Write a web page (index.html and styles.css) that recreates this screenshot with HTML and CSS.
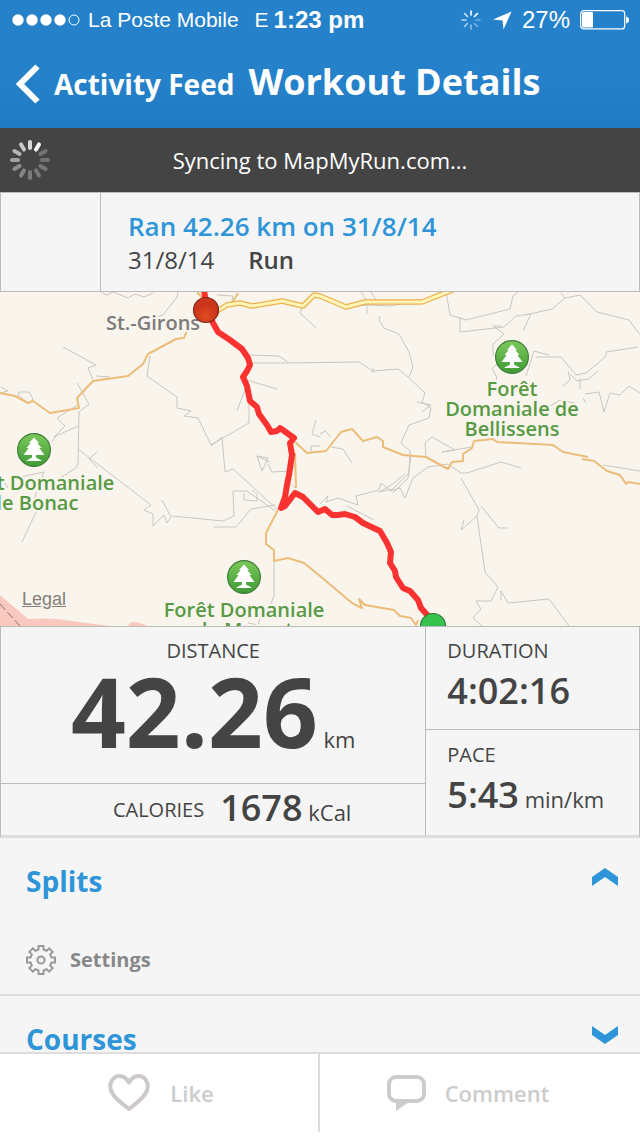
FILE: index.html
```html
<!DOCTYPE html>
<html lang="en">
<head>
    <meta charset="UTF-8">
    <meta name="viewport" content="width=device-width, initial-scale=1.0">
    <title>Workout Details</title>
    <link rel="stylesheet" href="styles.css">
</head>
<body>
    <header class="top">
        <div class="status-bar">
            <div class="status-left">
                <svg class="signal" width="68" height="12" viewBox="0 0 68 12" fill="#fff">
                    <circle cx="6" cy="6" r="5.7"/>
                    <circle cx="20" cy="6" r="5.7"/>
                    <circle cx="34" cy="6" r="5.7"/>
                    <circle cx="48" cy="6" r="5.7"/>
                    <circle cx="62" cy="6" r="5" fill="none" stroke="#fff"/>
                </svg>
                <span class="carrier">La Poste Mobile</span>
                <span class="network">E</span>
                <span class="time">1:23 pm</span>
            </div>
            <div class="status-right">
                <svg width="20" height="20" viewBox="-10 -10 20 20" stroke="#fff" stroke-width="1.6" stroke-linecap="round">
                    <path d="M0-5V-9"/>
                    <path d="M3.5-3.5L6.5-6.5"/>
                    <path d="M5 0H9" opacity=".35"/>
                    <path d="M3.5 3.5L6.5 6.5" opacity=".4"/>
                    <path d="M0 5V9" opacity=".5"/>
                    <path d="M-3.5 3.5L-6.5 6.5" opacity=".6"/>
                    <path d="M-5 0H-9" opacity=".7"/>
                    <path d="M-3.5-3.5L-6.5-6.5" opacity=".8"/>
                </svg>
                <svg class="location" width="19" height="19" viewBox="0 0 19 19" fill="#fff">
                    <path d="M18.500.5L10.500 18.500 9.500 9.500 0 8.500z"/>
                </svg>
                <span class="percent">27%</span>
                <svg width="50" height="20" viewBox="0 0 50 20">
                    <rect x=".7" y=".7" width="44" height="18.200" rx="3" fill="none" stroke="#fff" stroke-width="1.200"/>
                    <rect x="2" y="2" width="11" height="15.500" rx="1" fill="#fff"/>
                    <path d="M46 6.500q3 .5 3 3.500t-3 3.500z" fill="#fff"/>
                </svg>
            </div>
        </div>
        <nav class="nav-bar">
            <button type="button" class="back">
                <svg width="24" height="40" viewBox="0 0 24 40" fill="none" stroke="#fff" stroke-width="6">
                    <path d="M21.500 2.500L4 20l17.500 17.500"/>
                </svg>
                <span>Activity Feed</span>
            </button>
            <h1>Workout Details</h1>
        </nav>
    </header>

    <div class="sync" role="status">
        <svg width="40" height="40" viewBox="-20 -20 40 40" stroke="#fff" stroke-width="4" stroke-linecap="round">
            <path d="M0-12V-18" opacity=".8"/>
            <path d="M0-12V-18" transform="rotate(30)" opacity=".95"/>
            <path d="M0-12V-18" transform="rotate(60)" opacity=".25"/>
            <path d="M0-12V-18" transform="rotate(90)" opacity=".25"/>
            <path d="M0-12V-18" transform="rotate(120)" opacity=".27"/>
            <path d="M0-12V-18" transform="rotate(150)" opacity=".27"/>
            <path d="M0-12V-18" transform="rotate(180)" opacity=".3"/>
            <path d="M0-12V-18" transform="rotate(210)" opacity=".35"/>
            <path d="M0-12V-18" transform="rotate(240)" opacity=".4"/>
            <path d="M0-12V-18" transform="rotate(270)" opacity=".5"/>
            <path d="M0-12V-18" transform="rotate(300)" opacity=".6"/>
            <path d="M0-12V-18" transform="rotate(330)" opacity=".7"/>
        </svg>
        <p>Syncing to MapMyRun.com...</p>
    </div>

    <main>
        <section class="summary">
            <div class="photo"></div>
            <div class="summary-text">
                <h2>Ran 42.26 km on 31/8/14</h2>
                <p><span>31/8/14</span> <strong>Run</strong></p>
            </div>
        </section>

        <section class="map">
            <svg viewBox="0 0 640 334" preserveAspectRatio="xMidYMid slice" role="img" aria-label="Route map">
                <defs>
                    <linearGradient id="green" x2="0" y2="1">
                        <stop offset="0" stop-color="#7cc95c"/>
                        <stop offset="1" stop-color="#3f9a34"/>
                    </linearGradient>
                    <radialGradient id="red" cx=".5" cy=".75">
                        <stop offset="0" stop-color="#e04a22"/>
                        <stop offset="1" stop-color="#c9341a"/>
                    </radialGradient>
                    <g id="tree">
                        <circle r="17.500" fill="#fff" opacity=".7"/>
                        <circle r="16.400" fill="url(#green)" stroke="#3c7c33" stroke-width="1.200"/>
                        <path fill="#fff" d="M0-12.500L5-7 3.200-7 7.500-2 5.300-2 10.500 5H2V7.500L7.500 10.500V11H-7.500V10.500L-2 7.500V5H-10.500L-5.300-2-7.500-2-3.200-7-5-7z"/>
                    </g>
                </defs>

                <!-- border zone -->
                <g fill="#f9c9bf">
                    <path d="M0 303L28 327Q42 326 58 327 78 330 110 334H0z"/>
                    <path d="M128 334q2-6 12-3l8 3z"/>
                </g>
                <path d="M0 312L20 334" stroke="#8d6f6a" stroke-dasharray="8 3"/>

                <!-- small roads -->
                <g class="minor">
                    <path d="M101 0l6 3 6-3 5 2 10 4 7-4 9 3 9-4M178 0l-1 5-14 18-6 2"/>
                    <path d="M63 55l33 18-8 3 5 12M96 84l14 1M77 91l12 21-10 8-1 52-2 4-18 11"/>
                    <path d="M150 64l-3 20 30 21v11l14 3-7 5 14 2 13 27 38-22V106M248 89l-11 30"/>
                    <path d="M211 154l11-9 3 35 8-3 45 41M249 63l30 1 10 7M249 71h37l73-1 14 9M247 88l30 9"/>
                    <path d="M217 3l16 1-2 10M302 16l-2 5 16 15M361 0l6 9v13M371 0l5 8M0 101l8-2-7-4M18 103l1-3 10 0 4 7-5 5M18 103l10 8"/>
                    <path d="M78 134l-22 10-4 6M79 112l-22 14 8 8-11 11M78 157l73 56-7 5 9 4v12l11-11 3 8 4-6-9-17M172 224l51 5 11-5-1-25 14 0 30 21"/>
                    <path d="M214 235h22l15-18 24-4M244 201v7l13 1v-7l-5-4M97 160l-8 7 9 9M0 183l8 13M22 250l15-32-2-14 9-24-24 5"/>
                    <path d="M257 164l5 15 6-13-11-2 13 6M268 172l4 8 18-1M287 188l8 8M274 270v34l-5 12M248 331l10 2 4-12M316 128l-4 14 8 3M311 160v-6l9 0"/>
                    <path d="M373 79l25-2 9 7 18 17-3 9 9 6-2 10-20 7-8 18 9 8-1 22-16 16-14 3 11-6 15-12"/>
                    <path d="M373 76v5M446 0l4 23 16 5 44-11 3-13 5-4M460 25v15l44-5 12-11 15-2-8 17M525 23l27-6 13-11-4-5M565 6l15-3 17 17 32 8 11 15"/>
                    <path d="M501 34h-8l11 8-11 10 0 12M501 70l-9 6 5 10-3 8M526 84l8-25 15 4M536 65l25 0 15 18 10-2 10-8 10-9 0-4 32-5M568 79l2 9-7 6M570 82l7 7 12-2 9-8M580 86v11"/>
                    <path d="M585 102l14-2 5 20 6-19 10 2 9-9 11 7M583 106l3 5M540 120l20-12 15 3"/>
                    <path d="M417 110l14 3-9 7M380 24l-1 4 5 8 15 6 10 18 4 15-4 10M353 14l17-1 20 1 10-2"/>
                    <path d="M320 142l5-3 6 6M331 155l12 2 9 14M426 165l-1-14 7-6 23 13-13 2 30-5M411 163l-3 23-15 15M320 212l8-8-2 6 12-4 20 7-2-9 23-6 2-7 10 8 9-3 5 10 8-20 15-11 20-3 13 9h6l34-11 20 6M461 186l18 32-2 6-16 14 3-10M481 214l18 22h8M477 224l8 56 13 15-7 14h-15l5 8-8 9 10 9M501 308l0-9 7 12 41-4 20 27M603 173l37 6M347 214l27 14"/>
                </g>

                <!-- secondary roads -->
                <g class="road">
                    <path d="M187 38l-3 8-8 1-28 15-5 10-15 12-35 5-16 17 2 10-29 5-17-12-5 2-13-7-15-3"/>
                    <path d="M295 150l12 11 19-2 15-19 11-3 11 12 14-4 6 4v6l20 8 23 2 22 12 4-7 11-1v-7l9-6 2-7 19-2 4 3 56 3 10 7 25 5M582 167l12 2 13 10 13 4 6 9 2-2 12 2"/>
                    <path d="M295 161l1 35M278 218l-12 23v11l8 6v11l14-3 16 5 16 13 32 27 10 5-3-9 6 6 29 5 6 6 11 2 5 7 2-5"/>
                    <path d="M197 0l9 10M238 1l-6 10"/>
                </g>

                <!-- highway -->
                <g fill="none" stroke-linejoin="round">
                    <path d="M212 22l15-9 13-2 12 3 30-5 21 5 11-11 6 1 26 11 19-5h57l33-13" stroke="#eeb04c" stroke-width="5.500"/>
                    <path d="M212 22l15-9 13-2 12 3 30-5 21 5 11-11 6 1 26 11 19-5h57l33-13" stroke="#fdf6b8" stroke-width="3"/>
                </g>

                <g class="place">
                    <text x="153" y="38" class="town">St.-Girons</text>
                    <text x="512" y="104">Forêt</text>
                    <text x="512" y="124">Domaniale de</text>
                    <text x="512" y="144">Bellissens</text>
                    <text x="34" y="198">Forêt Domaniale</text>
                    <text x="34" y="218">de Bonac</text>
                    <text x="244" y="325">Forêt Domaniale</text>
                    <text x="244" y="345">de Massat</text>
                </g>
                <use href="#tree" x="512" y="65"/>
                <use href="#tree" x="34" y="158"/>
                <use href="#tree" x="244" y="285"/>

                <path class="route" d="M204-2L207 18 213 31 218 40 230 48 242 57 248 66 250 73 247 79 243 85 247 94 250 109 257 115 259 122 267 133 271 140 277 139 280 136 287 141 294 146 290 151 292 163 289 183 287 193 285 205 281 216 285 214 295 201 303 205 318 220 325 217 332 223 338 223 345 222 355 225 363 231 380 239 387 251 391 260 390 271 395 279 396 285 403 296 410 299 418 308 421 316 430 326"/>
                <circle cx="206" cy="18" r="12.500" fill="url(#red)" stroke="#7b2a1c" stroke-width="1.200"/>
                <circle cx="433" cy="334" r="12.500" fill="#37c24d" stroke="#2a7a35" stroke-width="1.200"/>
            </svg>
            <a class="legal" href="#legal">Legal</a>
        </section>

        <section class="stats">
            <div class="stats-main">
                <div class="distance">
                    <h3>DISTANCE</h3>
                    <p><b>42.26</b> km</p>
                </div>
                <div class="calories">
                    <h3>CALORIES</h3>
                    <p><b>1678</b> kCal</p>
                </div>
            </div>
            <div class="stats-side">
                <div class="stat">
                    <h3>DURATION</h3>
                    <p><b>4:02:16</b></p>
                </div>
                <div class="stat">
                    <h3>PACE</h3>
                    <p><b>5:43</b> min/km</p>
                </div>
            </div>
        </section>

        <section class="panel">
            <button type="button" class="panel-toggle" aria-expanded="true">
                <span>Splits</span>
                <svg width="26" height="18" viewBox="0 0 26 18" fill="#2e95d8">
                    <path d="M0 9L13 0l13 9v9L13 9 0 18z"/>
                </svg>
            </button>
            <button type="button" class="settings">
                <svg width="30" height="30" viewBox="-15 -15 30 30" fill="none" stroke="#999" stroke-width="2">
                    <path d="M-2.500-14H2.500V-10.500L5.600-9.200 8.100-11.700 11.700-8.100 9.200-5.600 10.500-2.500H14V2.500H10.500L9.200 5.600 11.700 8.100 8.100 11.700 5.600 9.200 2.500 10.500V14H-2.500V10.500L-5.600 9.200-8.100 11.700-11.700 8.100-9.200 5.600-10.500 2.500H-14V-2.500H-10.500L-9.200-5.600-11.700-8.100-8.100-11.700-5.600-9.200-2.500-10.500z"/>
                    <circle r="3.600"/>
                </svg>
                <span>Settings</span>
            </button>
        </section>

        <section class="panel">
            <button type="button" class="panel-toggle" aria-expanded="false">
                <span>Courses</span>
                <svg width="26" height="18" viewBox="0 0 26 18" fill="#2e95d8">
                    <path d="M0 0L13 9 26 0v9L13 18 0 9z"/>
                </svg>
            </button>
        </section>
    </main>

    <footer class="actions">
        <button type="button" class="like">
            <svg width="42" height="38" viewBox="0 0 42 38" fill="none" stroke="#cdc9ca" stroke-width="4" stroke-linejoin="round">
                <path d="M21 8.500C17 1 9 .5 5 5 1 9.500 1.500 16 5.500 21 10 27 16 31 21 35 26 31 32 27 36.500 21 40.500 16 41 9.500 37 5 33 .5 25 1 21 8.500z"/>
            </svg>
            <span>Like</span>
        </button>
        <button type="button" class="comment">
            <svg width="40" height="38" viewBox="0 0 40 38">
                <rect x="2" y="3" width="35" height="24" rx="7" fill="none" stroke="#ccc" stroke-width="4"/>
                <path d="M9 28h13L9 37z" fill="#ccc"/>
            </svg>
            <span>Comment</span>
        </button>
    </footer>
</body>
</html>
```
FILE: styles.css
```css
* {
    box-sizing: border-box;
}

body {
    display: flex;
    flex-direction: column;
    height: 100vh;
    margin: 0;
    background-color: #f5f5f5;
    color: #444;
    font-family: "Open Sans", sans-serif;
}

h1, h2, h3, p {
    margin: 0;
}

button {
    display: flex;
    align-items: center;
    padding: 0;
    border: none;
    background: none;
    color: inherit;
    font: inherit;
    cursor: pointer;
}

svg {
    flex: none;
    display: block;
}

/* Header */
.top {
    background: linear-gradient(#2582ca 60%, #1f7ac3);
    color: white;
}

.status-bar {
    display: flex;
    justify-content: space-between;
    height: 40px;
    padding: 0 10px 0 12px;
    font-family: "Liberation Sans", Arial, sans-serif;
    font-size: 24px;
}

.status-left, .status-right {
    display: flex;
    align-items: center;
}

.carrier {
    margin-left: 8px;
    font-size: 21px;
}

.network {
    margin: 0 5px 0 16px;
    font-size: 21px;
}

.time {
    font-weight: bold;
}

.location {
    margin: 0 10px 0 12px;
}

.percent {
    margin-right: 10px;
}

.nav-bar {
    display: flex;
    align-items: baseline;
    gap: 14px;
    height: 88px;
    padding: 17px 16px 0;
}

.back {
    align-items: baseline;
    gap: 14px;
    font-size: 28px;
    font-weight: bold;
    line-height: 50px;
}

.back svg {
    align-self: center;
}

h1 {
    font-size: 36px;
    line-height: 50px;
}

/* Sync message */
.sync {
    display: grid;
    grid-template-columns: 40px 1fr 40px;
    align-items: center;
    height: 64px;
    padding: 0 10px;
    background-color: #444;
    color: white;
    font-size: 22px;
    text-align: center;
}

main {
    flex: 1;
    min-height: 0;
    overflow-y: auto;
    scrollbar-width: none;
}

/* Workout summary */
.summary {
    display: flex;
    height: 100px;
    border: 1px solid #bbb;
}

.photo {
    width: 100px;
    border-right: 1px solid #bbb;
}

.summary-text {
    padding: 16px 27px;
    line-height: 34px;
}

.summary-text h2 {
    color: #2e95d8;
    font-size: 26px;
    font-weight: 600;
}

.summary-text p {
    display: flex;
    gap: 34px;
    font-size: 24px;
}

.summary-text strong {
    font-weight: 600;
}

/* Map */
.map {
    position: relative;
    height: 334px;
    background-color: #f9f5ed;
}

.map svg {
    width: 100%;
    height: 100%;
}

.minor {
    fill: none;
    stroke: #c9c6c2;
    stroke-width: 1;
}

.road {
    fill: none;
    stroke: #ecbd78;
    stroke-width: 2;
    stroke-linejoin: round;
}

.route {
    fill: none;
    stroke: #fb3330;
    stroke-width: 6;
    stroke-linecap: round;
    stroke-linejoin: round;
}

.place {
    fill: #589a44;
    stroke: #f9f5ed;
    stroke-width: 4;
    paint-order: stroke;
    font-size: 20px;
    font-weight: 600;
    text-anchor: middle;
}

.place .town {
    fill: #7b7b7b;
}

.legal {
    position: absolute;
    left: 22px;
    bottom: 16px;
    color: #857f7b;
    font-family: "Liberation Sans", Arial, sans-serif;
    font-size: 18px;
}

/* Stats */
.stats {
    display: grid;
    grid-template-columns: 2fr 1fr;
    border: 1px solid #bbb;
    border-bottom: 3px solid #ddd;
}

.stats h3 {
    font-size: 20px;
    font-weight: normal;
    line-height: 28px;
}

.stats p {
    font-size: 22px;
    line-height: 52px;
}

.stats b {
    font-size: 36px;
    font-weight: 600;
}

.stats-main {
    border-right: 1px solid #bbb;
}

.distance {
    height: 157px;
    padding-top: 10px;
    border-bottom: 1px solid #bbb;
    text-align: center;
}

.stats .distance p {
    line-height: 92px;
}

.stats .distance b {
    font-size: 96px;
    font-weight: bold;
}

.calories {
    display: flex;
    align-items: center;
    justify-content: center;
    gap: 16px;
    height: 51px;
    padding-left: 38px;
}

.calories p {
    line-height: 48px;
}

.stat {
    height: 102px;
    padding: 10px 21px 0;
}

.stat + .stat {
    height: 106px;
    padding-top: 11px;
    border-top: 1px solid #bbb;
}

/* Collapsible panels */
.panel {
    padding: 24px 22px 19px 26px;
    border-bottom: 2px solid #ddd;
}

.panel-toggle {
    justify-content: space-between;
    width: 100%;
    color: #2e95d8;
    font-size: 28px;
    font-weight: bold;
    line-height: 38px;
}

.panel-toggle svg {
    margin-bottom: 8px;
}

.settings {
    gap: 14px;
    margin-top: 45px;
    color: #888;
    font-size: 20px;
    font-weight: bold;
    line-height: 30px;
}

/* Bottom bar */
.actions {
    display: flex;
    height: 84px;
    padding-bottom: 4px;
    border-top: 2px solid #ddd;
    background-color: white;
}

.actions button {
    width: 50%;
    justify-content: center;
    color: #ccc;
    font-size: 22px;
    font-weight: 600;
}

.actions .like {
    gap: 20px;
    padding-left: 4px;
    border-right: 2px solid #ddd;
}

.actions .comment {
    gap: 18px;
    padding-right: 24px;
}
```
